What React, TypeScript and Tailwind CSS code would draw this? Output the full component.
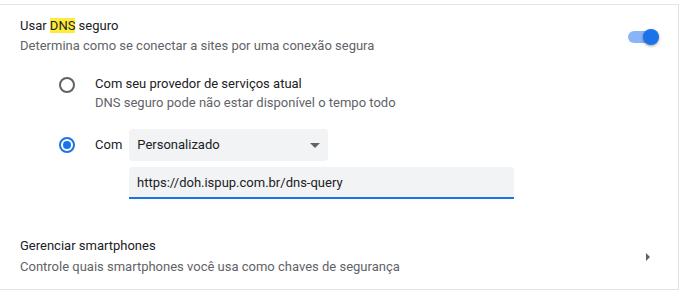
import React from 'react';

function Radio({ checked }: { checked: boolean }) {
  return checked ? (
    <div className="w-[16px] h-[16px] rounded-full border-2 border-[#1a73e8] flex items-center justify-center shrink-0">
      <div className="w-[8px] h-[8px] rounded-full bg-[#1a73e8]"></div>
    </div>
  ) : (
    <div className="w-[16px] h-[16px] rounded-full border-2 border-[#5f6368] shrink-0"></div>
  );
}

function App() {
  return (
    <div className="min-h-screen bg-white pt-[4px] font-['Roboto',sans-serif] text-[13px] leading-[20px] text-[#202124]">
      <div className="w-[679px] border-t border-r border-b border-[#e3e3e3]">
        {/* Secure DNS toggle row */}
        <div className="flex items-center pl-[20px] pr-[19px] pt-[11px]">
          <div className="flex-1">
            <div>
              Usar <span className="bg-[#ffeb3b]">DNS</span> seguro
            </div>
            <div className="text-[#5f6368]">Determina como se conectar a sites por uma conexão segura</div>
          </div>
          <div className="relative w-[31px] h-[16px] mt-[2px]">
            <div className="absolute left-0 top-[2px] w-[28px] h-[12px] rounded-full bg-[#8ab4f8]"></div>
            <div className="absolute right-0 top-0 w-[16px] h-[16px] rounded-full bg-[#1a73e8] shadow-[0_1px_3px_rgba(0,0,0,0.4)]"></div>
          </div>
        </div>

        {/* Radio group */}
        <div className="pl-[59px] mt-[18px]">
          <div className="flex">
            <div className="pt-[3px]">
              <Radio checked={false} />
            </div>
            <div className="ml-[20px]">
              <div>Com seu provedor de serviços atual</div>
              <div className="text-[#5f6368] -mt-[1px]">DNS seguro pode não estar disponível o tempo todo</div>
            </div>
          </div>

          <div className="flex items-center mt-[16px]">
            <Radio checked={true} />
            <div className="ml-[20px]">Com</div>
            <div className="ml-[7px] w-[199px] h-[32px] rounded-[4px] bg-[#f1f3f4] flex items-center justify-between pl-[8px] pr-[8px]">
              <span>Personalizado</span>
              <svg width="10" height="5" viewBox="0 0 10 5">
                <path d="M0 0 L10 0 L5 5 Z" fill="#5f6368" />
              </svg>
            </div>
          </div>

          <div className="ml-[70px] mt-[6px] w-[385px] h-[32px] rounded-t-[4px] bg-[#f1f3f4] border-b-2 border-[#1a73e8] flex items-center pl-[8px] pt-[1px]">
            https://doh.ispup.com.br/dns-query
          </div>
        </div>

        {/* Manage phones row */}
        <div className="flex items-center pl-[20px] pr-[27px] mt-[37px] pb-[12px]">
          <div className="flex-1">
            <div>Gerenciar smartphones</div>
            <div className="text-[#5f6368] mt-[1px]">Controle quais smartphones você usa como chaves de segurança</div>
          </div>
          <svg width="5" height="8" viewBox="0 0 5 8">
            <path d="M0 0 L4 4 L0 8 Z" fill="#5f6368" />
          </svg>
        </div>
      </div>
    </div>
  );
}

export default App;
